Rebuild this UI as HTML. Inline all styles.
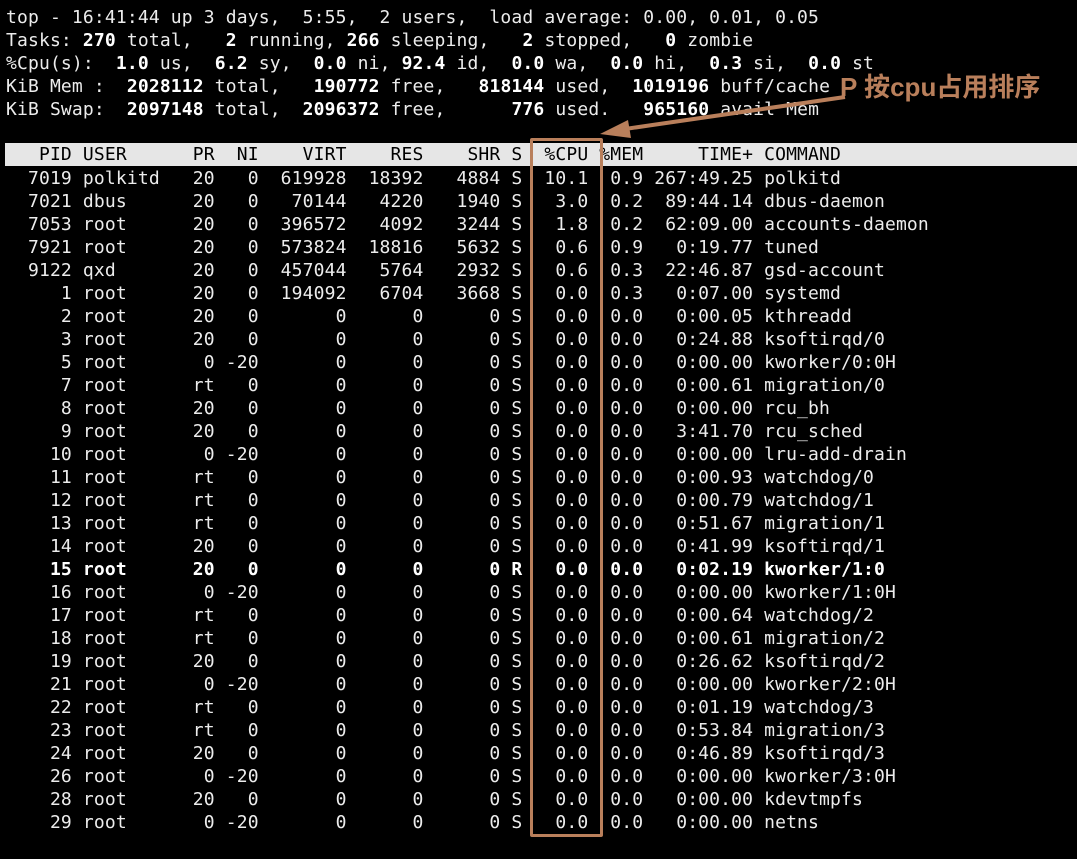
<!DOCTYPE html>
<html><head><meta charset="utf-8"><style>
html,body{margin:0;padding:0;background:#000;width:1077px;height:859px;overflow:hidden;position:relative}
pre{margin:0;position:absolute;left:6px;top:6px;font-family:"DejaVu Sans Mono","Liberation Mono",monospace;font-size:18px;letter-spacing:0.15px;line-height:23px;color:#ececec;white-space:pre}
b{font-weight:bold;color:#fff}
.hdr{position:absolute;left:5px;top:143px;width:1072px;height:23px;background:#e6e6e6}
.hdr pre{left:1px;top:0;color:#000}
.box{position:absolute;left:530px;top:138px;width:67px;height:693px;border:3px solid #b97f5b;border-radius:2px}
.ann{position:absolute;left:840px;top:67px;font-family:"Liberation Sans","Noto Sans CJK SC",sans-serif;font-weight:bold;font-size:26px;color:#b97f5b;white-space:nowrap}
svg{position:absolute;left:0;top:0}
</style></head><body>
<pre>top - 16:41:44 up 3 days,  5:55,  2 users,  load average: 0.00, 0.01, 0.05
Tasks: <b>270</b> total,   <b>2</b> running, <b>266</b> sleeping,   <b>2</b> stopped,   <b>0</b> zombie
%Cpu(s):  <b>1.0</b> us,  <b>6.2</b> sy,  <b>0.0</b> ni, <b>92.4</b> id,  <b>0.0</b> wa,  <b>0.0</b> hi,  <b>0.3</b> si,  <b>0.0</b> st
KiB Mem :  <b>2028112</b> total,   <b>190772</b> free,   <b>818144</b> used,  <b>1019196</b> buff/cache
KiB Swap:  <b>2097148</b> total,  <b>2096372</b> free,      <b>776</b> used.   <b>965160</b> avail Mem</pre>
<div class="hdr"><pre>   PID USER      PR  NI    VIRT    RES    SHR S  %CPU %MEM     TIME+ COMMAND</pre></div>
<pre style="top:167px">  7019 polkitd   20   0  619928  18392   4884 S  10.1  0.9 267:49.25 polkitd
  7021 dbus      20   0   70144   4220   1940 S   3.0  0.2  89:44.14 dbus-daemon
  7053 root      20   0  396572   4092   3244 S   1.8  0.2  62:09.00 accounts-daemon
  7921 root      20   0  573824  18816   5632 S   0.6  0.9   0:19.77 tuned
  9122 qxd       20   0  457044   5764   2932 S   0.6  0.3  22:46.87 gsd-account
     1 root      20   0  194092   6704   3668 S   0.0  0.3   0:07.00 systemd
     2 root      20   0       0      0      0 S   0.0  0.0   0:00.05 kthreadd
     3 root      20   0       0      0      0 S   0.0  0.0   0:24.88 ksoftirqd/0
     5 root       0 -20       0      0      0 S   0.0  0.0   0:00.00 kworker/0:0H
     7 root      rt   0       0      0      0 S   0.0  0.0   0:00.61 migration/0
     8 root      20   0       0      0      0 S   0.0  0.0   0:00.00 rcu_bh
     9 root      20   0       0      0      0 S   0.0  0.0   3:41.70 rcu_sched
    10 root       0 -20       0      0      0 S   0.0  0.0   0:00.00 lru-add-drain
    11 root      rt   0       0      0      0 S   0.0  0.0   0:00.93 watchdog/0
    12 root      rt   0       0      0      0 S   0.0  0.0   0:00.79 watchdog/1
    13 root      rt   0       0      0      0 S   0.0  0.0   0:51.67 migration/1
    14 root      20   0       0      0      0 S   0.0  0.0   0:41.99 ksoftirqd/1
<b>    15 root      20   0       0      0      0 R   0.0  0.0   0:02.19 kworker/1:0</b>
    16 root       0 -20       0      0      0 S   0.0  0.0   0:00.00 kworker/1:0H
    17 root      rt   0       0      0      0 S   0.0  0.0   0:00.64 watchdog/2
    18 root      rt   0       0      0      0 S   0.0  0.0   0:00.61 migration/2
    19 root      20   0       0      0      0 S   0.0  0.0   0:26.62 ksoftirqd/2
    21 root       0 -20       0      0      0 S   0.0  0.0   0:00.00 kworker/2:0H
    22 root      rt   0       0      0      0 S   0.0  0.0   0:01.19 watchdog/3
    23 root      rt   0       0      0      0 S   0.0  0.0   0:53.84 migration/3
    24 root      20   0       0      0      0 S   0.0  0.0   0:46.89 ksoftirqd/3
    26 root       0 -20       0      0      0 S   0.0  0.0   0:00.00 kworker/3:0H
    28 root      20   0       0      0      0 S   0.0  0.0   0:00.00 kdevtmpfs
    29 root       0 -20       0      0      0 S   0.0  0.0   0:00.00 netns</pre>
<div class="box"></div>
<svg width="1077" height="859">
<line x1="845" y1="97" x2="625" y2="129" stroke="#b97f5b" stroke-width="4"/>
<polygon points="600,134 628,120 631,138" fill="#b97f5b"/>
</svg>
<div class="ann">P 按cpu占用排序</div>
</body></html>
